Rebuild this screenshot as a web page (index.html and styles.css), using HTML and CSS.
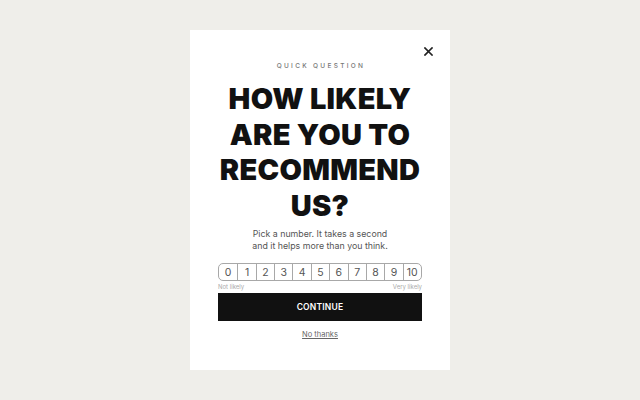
FILE: index.html
```html
<!DOCTYPE html>
<html>
<head>
<meta charset="utf-8">
<link rel="stylesheet" href="styles.css">
</head>
<body>
<div class="page">
  <div class="card">
    <button class="close" aria-label="Close">
      <svg width="9" height="9" viewBox="0 0 9 9"><path d="M1 1L8 8M8 1L1 8" stroke="#222" stroke-width="1.7" stroke-linecap="square"/></svg>
    </button>
    <div class="eyebrow">QUICK QUESTION</div>
    <h1 class="title">HOW LIKELY<br>ARE YOU TO<br>RECOMMEND<br>US?</h1>
    <p class="sub">Pick a number. It takes a second<br>and it helps more than you think.</p>
    <div class="scale">
      <span class="num">0</span><span class="num">1</span><span class="num">2</span><span class="num">3</span><span class="num">4</span><span class="num">5</span><span class="num">6</span><span class="num">7</span><span class="num">8</span><span class="num">9</span><span class="num">10</span>
    </div>
    <div class="ends"><span>Not likely</span><span>Very likely</span></div>
    <button class="cta">CONTINUE</button>
    <a class="skip" href="#">No thanks</a>
  </div>
</div>
</body>
</html>
```
FILE: styles.css
```css
* { box-sizing: border-box; }
html, body { margin: 0; padding: 0; }
body {
  background: #efeeea;
  font-family: Inter, "Liberation Sans", sans-serif;
  width: 640px;
  height: 400px;
}
.page {
  display: flex;
  justify-content: center;
  padding-top: 30px;
}
.card {
  position: relative;
  width: 260px;
  height: 340px;
  background: #fff;
  display: flex;
  flex-direction: column;
  align-items: center;
  padding: 0 28px;
}
.close {
  position: absolute;
  top: 17px;
  right: 17px;
  width: 9px;
  height: 9px;
  padding: 0;
  border: 0;
  background: none;
  display: flex;
}
.eyebrow {
  margin-top: 32px;
  font-size: 6.5px;
  letter-spacing: 2.3px;
  color: #777;
  font-weight: 500;
  line-height: 8px;
  padding-left: 2px;
}
.title {
  margin: 11px 0 0;
  font-family: Inter, "Liberation Sans", sans-serif;
  font-weight: 900;
  font-size: 29px;
  line-height: 35.5px;
  text-align: center;
  color: #111;
  letter-spacing: 0.3px;
}
.sub {
  margin: 5px 0 0;
  font-size: 8.8px;
  line-height: 12px;
  color: #555;
  text-align: center;
}
.scale {
  margin-top: 11px;
  width: 204px;
  height: 18px;
  display: grid;
  grid-template-columns: repeat(11, 1fr);
  border: 1px solid #a8a8a8;
  border-radius: 5px;
  overflow: hidden;
}
.num {
  display: flex;
  align-items: center;
  justify-content: center;
  font-size: 10.5px;
  color: #555;
  border-left: 1px solid #a8a8a8;
}
.num:first-child { border-left: 0; }
.ends {
  width: 204px;
  display: flex;
  justify-content: space-between;
  font-size: 6px;
  color: #aaa;
  margin-top: 2px;
  line-height: 8px;
}
.cta {
  margin-top: 2px;
  width: 204px;
  height: 28px;
  background: #111;
  color: #fff;
  border: 0;
  font-family: Inter, "Liberation Sans", sans-serif;
  font-weight: 600;
  font-size: 8.5px;
  letter-spacing: 0.2px;
}
.skip {
  margin-top: 9px;
  font-size: 7.5px;
  color: #666;
  text-decoration: underline;
}
```
